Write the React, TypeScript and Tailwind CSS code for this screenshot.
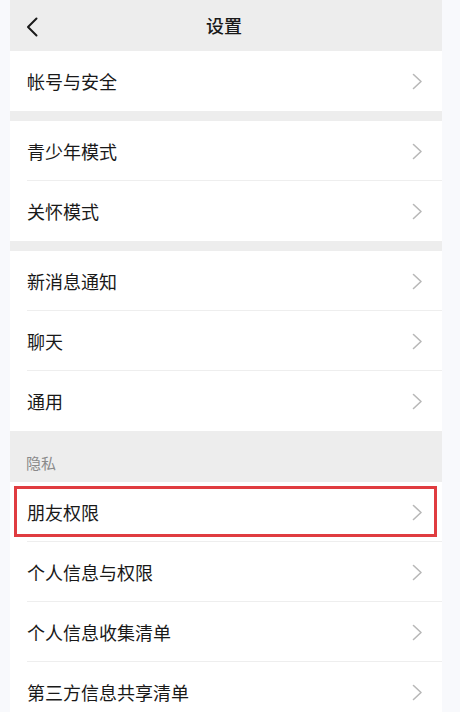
import React from "react";

const font = { fontFamily: '"Noto Sans CJK SC", "Noto Sans", sans-serif' };

function Chevron() {
  return (
    <svg width="11" height="17" viewBox="0 0 11 17" fill="none">
      <polyline points="1.5,1.5 9,8.5 1.5,15.5" stroke="#b8b8b8" strokeWidth="1.6" strokeLinecap="round" strokeLinejoin="round" />
    </svg>
  );
}

function Row({ label, last, highlight }: { label: string; last?: boolean; highlight?: boolean }) {
  return (
    <div className="relative h-[60px] bg-white flex items-center">
      <div className="flex-1 flex items-center justify-between pl-[17px] pr-[19px] h-full">
        <span className="text-[18px] text-[#191919] leading-none">{label}</span>
        <Chevron />
      </div>
      {!last && <div className="absolute bottom-0 left-[17px] right-0 h-px bg-[#eeeeee]" />}
      {highlight && (
        <div className="absolute left-[4px] top-[4px] w-[423px] h-[51px] border-[3px] border-[#e03c40]" />
      )}
    </div>
  );
}

export default function App() {
  return (
    <div className="w-full min-h-[712px] bg-[#f8f9fc] pl-[10px]" style={font}>
      <div className="w-[432px] bg-[#ededed]">
        <div className="relative h-[51px] flex items-center justify-center">
          <svg className="absolute left-[16px] top-[17px]" width="13" height="20" viewBox="0 0 13 20" fill="none">
            <polyline points="10.5,1.5 2,10 10.5,18.5" stroke="#1a1a1a" strokeWidth="2" strokeLinecap="round" strokeLinejoin="round" />
          </svg>
          <span className="text-[18px] font-medium text-[#191919] -ml-[4px]">设置</span>
        </div>
        <Row label="帐号与安全" last />
        <div className="h-[10px]" />
        <Row label="青少年模式" />
        <Row label="关怀模式" last />
        <div className="h-[10px]" />
        <Row label="新消息通知" />
        <Row label="聊天" />
        <Row label="通用" last />
        <div className="h-[51px] flex items-end pl-[16px] pb-[8px]">
          <span className="text-[15px] text-[#8a8a8a]">隐私</span>
        </div>
        <Row label="朋友权限" highlight />
        <Row label="个人信息与权限" />
        <Row label="个人信息收集清单" />
        <Row label="第三方信息共享清单" last />
      </div>
    </div>
  );
}
